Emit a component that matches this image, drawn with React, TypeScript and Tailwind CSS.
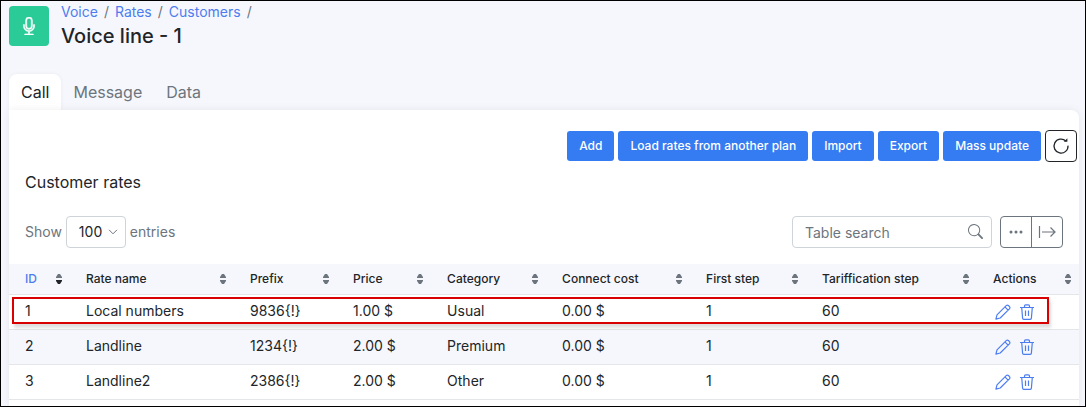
import React from "react";
import { BsMic, BsSearch, BsThreeDots } from "react-icons/bs";

const columns = [
  { label: "ID", width: "w-[5.70%]" },
  { label: "Rate name", width: "w-[15.33%]" },
  { label: "Prefix", width: "w-[9.63%]" },
  { label: "Price", width: "w-[8.79%]" },
  { label: "Category", width: "w-[10.75%]" },
  { label: "Connect cost", width: "w-[13.46%]" },
  { label: "First step", width: "w-[10.84%]" },
  { label: "Tariffication step", width: "w-[15.98%]" },
  { label: "Actions", width: "w-[9.52%]" },
];

const rates = [
  ["1", "Local numbers", "9836{!}", "1.00 $", "Usual", "0.00 $", "1", "60"],
  ["2", "Landline", "1234{!}", "2.00 $", "Premium", "0.00 $", "1", "60"],
  ["3", "Landline2", "2386{!}", "2.00 $", "Other", "0.00 $", "1", "60"],
];

function SortIcon({ active }: { active?: boolean }) {
  return (
    <svg viewBox="0 0 6 10" className="h-[10px] w-[6px] shrink-0" aria-hidden="true">
      <path d="M0 4V3L2 0H4L6 3V4Z" fill="#6c757d" />
      <path d="M0 6V7L2 10H4L6 7V6Z" fill={active ? "#212529" : "#6c757d"} />
    </svg>
  );
}

function PencilIcon() {
  return (
    <svg viewBox="0 0 16 16" className="size-4" fill="none" stroke="currentColor" strokeWidth="1.2" strokeLinejoin="round" aria-hidden="true">
      <path d="M.9 15.1 2 10.8 11.2 1.6Q12.3.6 13.4 1.5L14.5 2.6Q15.4 3.7 14.4 4.8L5.2 14ZM9.9 2.9 13.1 6.1" />
    </svg>
  );
}

function TrashIcon() {
  return (
    <svg viewBox="0 0 16 16" className="size-4" fill="none" stroke="currentColor" strokeWidth="1.2" aria-hidden="true">
      <path d="M1 3.5H15M5.5 3.5V2Q5.5 .8 6.7 .8H9.3Q10.5 .8 10.5 2V3.5M2.7 3.5 3.6 14.1Q3.7 15.3 4.8 15.3H11.2Q12.3 15.3 12.4 14.1L13.3 3.5" />
      <path d="M6.5 6.5V12M9.5 6.5V12" />
    </svg>
  );
}

function RefreshIcon() {
  return (
    <svg viewBox="0 0 18 18" className="size-[18px]" fill="none" stroke="currentColor" strokeWidth="1.3" aria-hidden="true">
      <path d="M13.8 4A7 7 0 1 0 16 8.6" />
      <path d="M11.8 4.8H15.4V1.2Z" fill="currentColor" stroke="none" />
    </svg>
  );
}

function ExpandIcon() {
  return (
    <svg viewBox="0 0 18 14" className="h-[14px] w-[18px]" fill="none" stroke="currentColor" strokeWidth="1.2" aria-hidden="true">
      <path d="M1.5 1V13M4 7H17M12.5 2.5 17 7 12.5 11.5" />
    </svg>
  );
}

function PrimaryButton({ children }: { children: React.ReactNode }) {
  return (
    <button type="button" className="h-[30px] rounded-[3px] bg-[#357bf2] px-3 text-xs font-medium text-white">
      {children}
    </button>
  );
}

export default function App() {
  return (
    <div className="flex h-screen flex-col overflow-hidden border border-black bg-[#f6f7fc] font-['Inter','Liberation_Sans',sans-serif] text-sm text-[#212529]">
      <header className="flex items-end gap-3 pt-[3px] pl-2">
        <div className="mb-1 flex size-10 items-center justify-center rounded bg-[#2acb97] text-white">
          <BsMic className="size-[18px]" strokeWidth="0.5" />
        </div>
        <div>
          <nav aria-label="Breadcrumb" className="flex h-4 items-center gap-[6px] leading-4 text-[#6c757d]">
            {["Voice", "Rates", "Customers"].map((item) => (
              <React.Fragment key={item}>
                <a href="#" className="text-[#4c7df0]">{item}</a>
                <span>/</span>
              </React.Fragment>
            ))}
          </nav>
          <h1 className="mt-[2px] text-xl leading-7 font-medium">Voice line - 1</h1>
        </div>
      </header>

      <div role="tablist" className="mt-6 ml-2 flex h-9 text-base text-[#6c757d]">
        <button type="button" role="tab" aria-selected="true" className="rounded-t-lg bg-white px-3 text-[#212529] shadow-[0_0_4px_rgba(0,0,0,0.05)]">Call</button>
        <button type="button" role="tab" aria-selected="false" className="px-3">Message</button>
        <button type="button" role="tab" aria-selected="false" className="px-3">Data</button>
      </div>

      <main className="relative mr-[6px] ml-2 grow rounded-tr-lg bg-white shadow-[0_0_8px_rgba(0,0,0,0.07)]">
        <div className="flex items-center justify-end gap-1 pt-5 pr-[2px]">
          <PrimaryButton>Add</PrimaryButton>
          <PrimaryButton>Load rates from another plan</PrimaryButton>
          <PrimaryButton>Import</PrimaryButton>
          <PrimaryButton>Export</PrimaryButton>
          <PrimaryButton>Mass update</PrimaryButton>
          <button type="button" aria-label="Refresh" className="flex size-8 items-center justify-center rounded border border-[#212529]">
            <RefreshIcon />
          </button>
        </div>

        <h2 className="mt-2 px-4 text-base leading-6">Customer rates</h2>

        <div className="mt-[22px] flex items-center justify-between pr-4 pl-4">
          <div className="flex items-center gap-1 text-[#6c757d]">
            <label htmlFor="page-size">Show</label>
            <div className="relative">
              <select id="page-size" className="h-8 w-[60px] appearance-none rounded border border-[#ced4da] bg-white pl-3 text-[#212529]" defaultValue="100">
                <option>100</option>
              </select>
              <svg viewBox="0 0 10 6" className="pointer-events-none absolute top-[13px] right-2 h-[6px] w-[10px]" fill="none" stroke="#6c757d" aria-hidden="true">
                <path d="M1 .8 5 4.8 9 .8" />
              </svg>
            </div>
            <span>entries</span>
          </div>
          <div className="flex gap-2 text-[#6c757d]">
            <div className="relative">
              <input type="search" aria-label="Table search" placeholder="Table search" className="h-8 w-[200px] rounded border border-[#ced4da] bg-white px-3 placeholder:text-[#6c757d]" />
              <BsSearch className="pointer-events-none absolute top-2 right-[9px] size-[15px]" />
            </div>
            <div className="flex h-8 divide-x divide-[#6c757d] rounded border border-[#6c757d]">
              <button type="button" aria-label="More" className="flex w-[31px] items-center justify-center"><BsThreeDots className="size-4" /></button>
              <button type="button" aria-label="Expand columns" className="flex w-[30px] items-center justify-center"><ExpandIcon /></button>
            </div>
          </div>
        </div>

        <div className="relative mt-4">
          <table className="w-full table-fixed border-separate border-spacing-0">
            <thead>
              <tr className="h-[31px] bg-[#f6f7fc]">
                {columns.map((column, index) => (
                  <th key={column.label} scope="col" className={`${column.width} border-b border-[#e4e6ea] pr-2 pl-4 text-left text-xs font-medium`}>
                    <div className="flex items-center justify-between whitespace-nowrap">
                      <span className={index === 0 ? "text-[#4c7df0]" : ""}>{column.label}</span>
                      <SortIcon active={index === 0} />
                    </div>
                  </th>
                ))}
              </tr>
            </thead>
            <tbody>
              {rates.map((row) => (
                <tr key={row[0]} className="h-[35px] even:bg-[#f6f7fc]">
                  {row.map((value, index) => (
                    <td key={index} className="border-b border-[#e4e6ea] pr-2 pb-[2px] pl-4 whitespace-nowrap">{value}</td>
                  ))}
                  <td className="border-b border-[#e4e6ea] pr-2 pl-4">
                    <div className="flex items-center gap-2 pl-[2px] text-[#4c7df0]">
                      <button type="button" aria-label="Edit"><PencilIcon /></button>
                      <button type="button" aria-label="Delete"><TrashIcon /></button>
                    </div>
                  </td>
                </tr>
              ))}
            </tbody>
          </table>
          <div className="pointer-events-none absolute top-[33px] right-[30px] left-[3px] h-[27px] border-2 border-[#d80000] shadow-[2px_4px_3px_rgba(0,0,0,0.13)]" />
        </div>
      </main>
    </div>
  );
}
